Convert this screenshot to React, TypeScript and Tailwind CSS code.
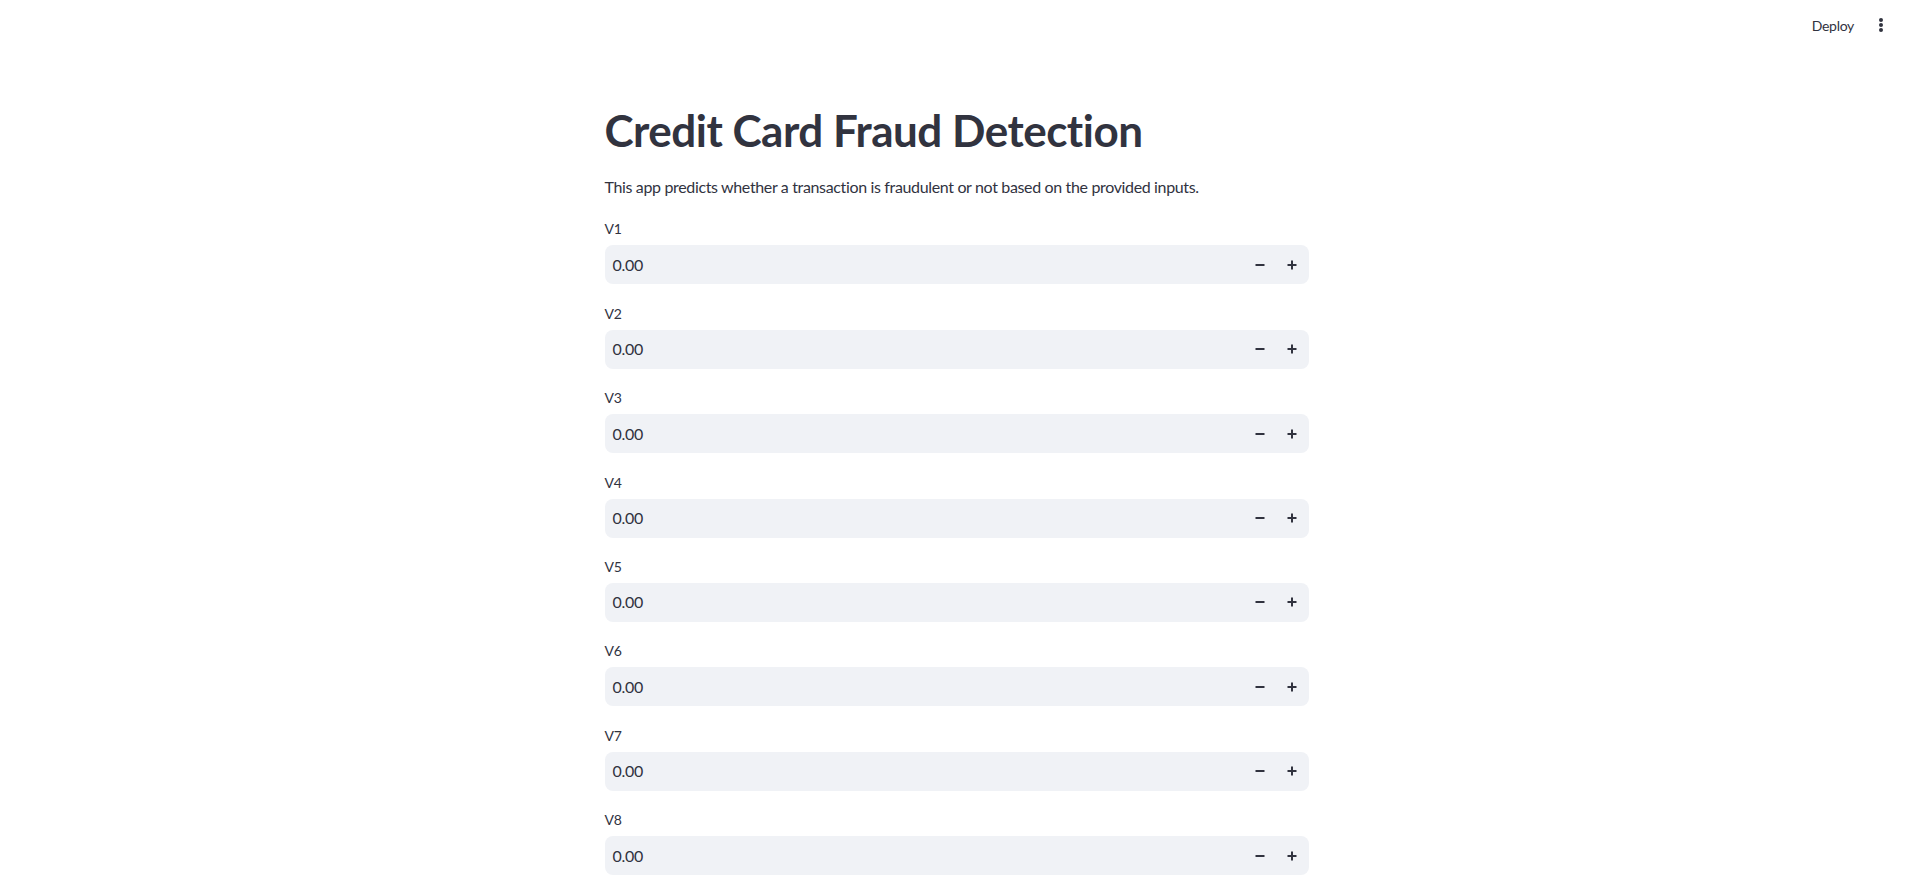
import React from "react";

const fields = ["V1", "V2", "V3", "V4", "V5", "V6", "V7", "V8", "V9", "V10"];

function Minus() {
  return (
    <svg width="12" height="12" viewBox="0 0 12 12">
      <rect x="1.5" y="5" width="9" height="2" fill="#31333F" />
    </svg>
  );
}

function Plus() {
  return (
    <svg width="12" height="12" viewBox="0 0 12 12">
      <rect x="1.5" y="5" width="9" height="2" fill="#31333F" />
      <rect x="5" y="1.5" width="2" height="9" fill="#31333F" />
    </svg>
  );
}

function NumberField({ label }: { label: string }) {
  return (
    <div className="flex flex-col">
      <div className="h-[23px] flex items-center text-[14px] text-[#31333F] tracking-[-0.2px]">{label}</div>
      <div className="mt-[5px] h-[39px] rounded-[8px] bg-[#F0F2F6] flex items-center pr-[1px]">
        <div className="flex-1 pl-[8px] text-[16px] text-[#31333F] tracking-[-0.3px]">0.00</div>
        <button className="w-[32px] h-full flex items-center justify-center">
          <Minus />
        </button>
        <button className="w-[32px] h-full flex items-center justify-center">
          <Plus />
        </button>
      </div>
    </div>
  );
}

export default function App() {
  return (
    <div
      className="h-[876px] overflow-hidden bg-white text-[#31333F]"
      style={{ fontFamily: "Lato, 'Liberation Sans', sans-serif" }}
    >
      <header className="h-[50px] flex items-center justify-end pr-[28px]">
        <span className="text-[14px] text-[#31333F] tracking-[-0.3px] mr-[17px]">Deploy</span>
        <svg width="20" height="20" viewBox="0 0 20 20">
          <circle cx="10" cy="5" r="2" fill="#31333F" />
          <circle cx="10" cy="10" r="2" fill="#31333F" />
          <circle cx="10" cy="15" r="2" fill="#31333F" />
        </svg>
      </header>
      <div className="pr-[6px]">
        <main className="w-[704px] mx-auto pt-[37px]">
          <h1 className="text-[44px] font-bold leading-[1.2] pt-[17px] pb-[17px] tracking-[-0.5px] text-[#31333F]">
            Credit Card Fraud Detection
          </h1>
          <p className="text-[16px] leading-[1.6] mb-[18px] tracking-[-0.35px]">
            This app predicts whether a transaction is fraudulent or not based on the provided inputs.
          </p>
          <div className="flex flex-col gap-[17.4px]">
            {fields.map((f) => (
              <NumberField key={f} label={f} />
            ))}
          </div>
        </main>
      </div>
    </div>
  );
}
